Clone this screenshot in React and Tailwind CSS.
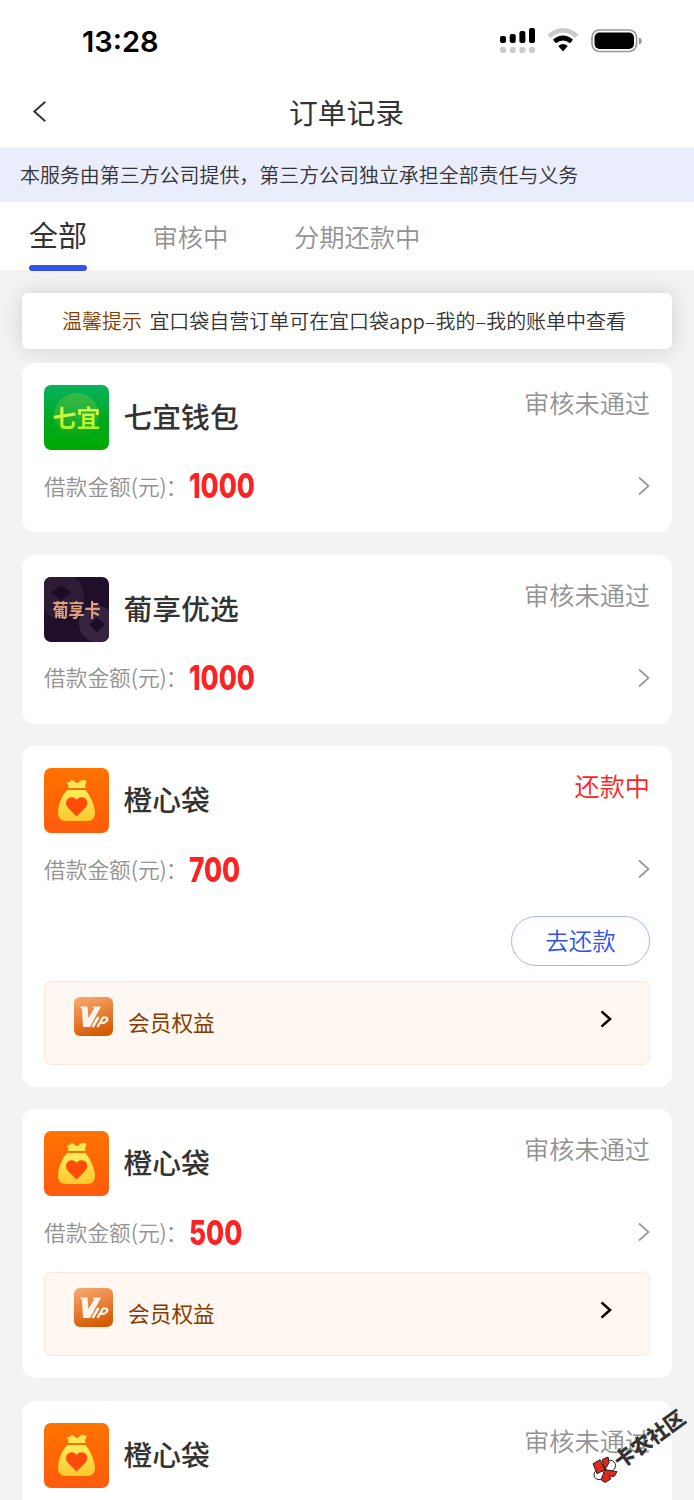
const tabs = ["全部", "审核中", "分期还款中"];

const orders = [
  { id: 1, name: "七宜钱包", logo: "qiyi", amount: 1000, status: "审核未通过" },
  { id: 2, name: "葡享优选", logo: "puxiang", amount: 1000, status: "审核未通过" },
  { id: 3, name: "橙心袋", logo: "bag", amount: 700, status: "还款中", repay: true, vip: true },
  { id: 4, name: "橙心袋", logo: "bag", amount: 500, status: "审核未通过", vip: true },
  { id: 5, name: "橙心袋", logo: "bag", amount: 500, status: "审核未通过", vip: true },
];

function StatusBar() {
  return (
    <div className="flex h-[76px] items-center justify-between pt-[6px] pr-[52px] pl-[82px]">
      <span className="pt-[2px] font-['Inter'] text-[29px] font-semibold text-black">13:28</span>
      <svg width="142" height="28" viewBox="0 0 142 28" className="mt-[-1px]">
        <g fill="#000">
          <rect x="0" y="9" width="6" height="7" rx="2" />
          <rect x="9.7" y="7" width="6" height="9" rx="2" />
          <rect x="19.4" y="4" width="6" height="12" rx="2" />
          <rect x="29" y="1" width="6" height="15" rx="2" />
        </g>
        <g fill="#cbcbcb">
          <rect x="0" y="20" width="6" height="6" rx="2" />
          <rect x="9.7" y="20" width="6" height="6" rx="2" />
          <rect x="19.4" y="20" width="6" height="6" rx="2" />
          <rect x="29" y="20" width="6" height="6" rx="2" />
        </g>
        <path d="M49 9.2Q63 -2.5 77 9.2" fill="none" stroke="#cbcbcb" strokeWidth="4.6" />
        <path d="M54.5 14.5Q63 7.5 71.5 14.5" fill="none" stroke="#000" strokeWidth="4.6" />
        <path d="M58.2 19Q63 15 67.8 19L63 24.5Z" fill="#000" />
        <rect x="92" y="3" width="44.5" height="21.5" rx="7.5" fill="#fff" stroke="#999" strokeWidth="1.7" />
        <rect x="94.5" y="5.5" width="39.5" height="16.5" rx="5" fill="#000" />
        <path d="M138.8 10.5q3 1 3 3.5t-3 3.5z" fill="#999" />
      </svg>
    </div>
  );
}

function Chevron({ className }) {
  return (
    <svg viewBox="0 0 12 20" fill="none" stroke="currentColor" className={className}>
      <path d="M1 1.5L10.5 10L1 18.5" />
    </svg>
  );
}

function Logo({ type }) {
  if (type === "qiyi") {
    return (
      <div className="relative flex size-[65px] items-center justify-center overflow-hidden rounded-[7px] bg-linear-to-b from-[#08b35c] via-[#02a81f] to-[#00aa00]">
        <div className="absolute top-[8px] left-[10px] size-[45px] rounded-full bg-linear-to-b from-[#35ba48] to-[#02a80f]" />
        <span className="relative mt-[-1px] bg-linear-to-b from-[#f0f550] to-[#9df51a] bg-clip-text text-[24px] leading-[34px] font-bold text-transparent">七宜</span>
      </div>
    );
  }
  if (type === "puxiang") {
    return (
      <div className="relative flex size-[65px] items-center justify-center overflow-hidden rounded-[7px] bg-[#200f2b]">
        <svg viewBox="0 0 65 65" className="absolute inset-0 size-[65px]">
          <circle cx="17" cy="19" r="23" fill="#2e1c37" />
          <path d="M17 8l10.5 7.5-10.5 7.5-10.5-7.5z" fill="#1b0c25" />
          <circle cx="53" cy="47" r="18" fill="#382440" />
          <path d="M53 40l8 7.5-8 7.5-8-7.5z" fill="#1c0d26" />
        </svg>
        <span className="relative scale-y-[1.15] text-[16px] leading-[24px] font-bold text-[#dea17b]">葡享卡</span>
      </div>
    );
  }
  return (
    <svg viewBox="0 0 65 65" className="size-[65px] rounded-[7px]">
      <defs>
        <linearGradient id="orange" x2="0" y2="1">
          <stop stopColor="#ff7300" />
          <stop offset="1" stopColor="#ff5b0c" />
        </linearGradient>
        <linearGradient id="gold" x2="0" y2="1">
          <stop stopColor="#ffed5b" />
          <stop offset="1" stopColor="#ffc72e" />
        </linearGradient>
      </defs>
      <rect width="65" height="65" fill="url(#orange)" />
      <path d="M24 20Q25.500 17.500 22.500 14.500Q26 14.500 27.500 12Q29.500 12 31 14Q33 16 35 14Q37 11.500 39 12Q42.500 11.500 42.500 13.500Q40.500 16.500 41.500 20Z" fill="#ffe654" />
      <path d="M23.500 22H41.500C46 27 51 38 51 45C51 50 48 53 43.500 53H21.500C17 53 14 50 14 45C14 37 18 27 23.500 22Z" fill="url(#gold)" />
      <path d="M32.500 48.500L24.200 40C21.200 37 21.500 32.500 24.500 30.300C27.500 28.200 31 29.300 32.500 32C34 29.300 38 28.200 41 30.300C44 32.500 44 37 41 40Z" fill="#ff4b08" />
    </svg>
  );
}

function VipIcon() {
  return (
    <svg viewBox="0 0 39 39" className="size-[39px] rounded-[6px]">
      <defs>
        <linearGradient id="vip" x1="0.2" y1="0" x2="0.5" y2="1">
          <stop stopColor="#f8a66c" />
          <stop offset="1" stopColor="#d55b03" />
        </linearGradient>
      </defs>
      <rect width="39" height="39" fill="url(#vip)" />
      <path d="M6 9.5H13.5L14.5 21L20 11.5L18.5 9.5H27L16 30H9L8 12Z" fill="#fff5ec" />
      <g fill="none" stroke="#fff5ec">
        <path d="M18.5 30L24.5 20" strokeWidth="2.6" />
        <path d="M23.5 30L29 20.5H32Q34.5 21 32.5 24Q31.5 25.8 29 25.8H26" strokeWidth="2.2" />
      </g>
    </svg>
  );
}

function OrderCard({ order }) {
  return (
    <div className="rounded-[13px] bg-white p-[22px]">
      <div className="flex">
        <Logo type={order.logo} />
        <div className="ml-[14.5px] flex-1 text-[28.8px] leading-[62px] font-medium text-[#333]">{order.name}</div>
        <div className={`text-[25.2px] leading-[35px] font-[350] ${order.repay ? "text-[#ff2222]" : "text-[#929292]"}`}>
          {order.status}
        </div>
      </div>
      <div className="mt-[17px] flex h-[40px] items-center">
        <span className="w-[145px] pb-[2px] text-[21.7px] font-[350] whitespace-nowrap text-[#929292]">
          借款金额(元)<span className="ml-[-1px]">：</span>
        </span>
        <span className="origin-left scale-x-[0.77] pb-[2px] font-['Inter'] text-[34px] font-extrabold text-[#ff2222]">{order.amount}</span>
        <Chevron className="mt-[-2px] ml-auto h-[20px] w-[12px] stroke-[1.7px] text-[#999]" />
      </div>
      {order.repay && (
        <div className="mt-[26px] mb-[-4px] flex justify-end">
          <button className="h-[50px] w-[139px] rounded-full border-[1.5px] border-[#a9b7f8] pb-[2px] text-[23.5px] font-[350] text-[#3152e8]">
            去还款
          </button>
        </div>
      )}
      {order.vip ? (
        <div className="mt-[18.8px] flex h-[84px] rounded-[7px] border-[1.5px] border-[#fde7d9] bg-[#fff8f2] pr-[37px] pl-[29px]">
          <div className="mt-[15px]">
            <VipIcon />
          </div>
          <span className="ml-[15px] flex-1 text-[21.7px] leading-[80px] text-[#843c00]">会员权益</span>
          <Chevron className="mt-[28px] h-[18px] w-[12px] stroke-[2.8px] text-black" />
        </div>
      ) : (
        <div className="h-[3.5px]" />
      )}
    </div>
  );
}

function Watermark() {
  return (
    <div className="absolute top-[1431px] left-[584px] flex w-[110px] rotate-[-36deg] items-center">
      <svg width="26" height="26" viewBox="0 0 26 26" className="shrink-0 rotate-[36deg]">
        <g stroke="#222" strokeWidth="1">
          <circle cx="18" cy="9" r="5.5" fill="#fff" />
          <circle cx="7" cy="18" r="5" fill="#fff" />
          <path d="M1 7L8 3L13 13L5 17Z" fill="#e3261b" />
          <path d="M10 3L16 0L17 6L13 13Z" fill="#e3261b" />
          <path d="M13 13L25 15L22 20L17 19L19 22L13 26L9 23Z" fill="#e3261b" />
        </g>
      </svg>
      <span className="text-[20.5px] leading-[28px] font-black whitespace-nowrap text-[#333]">卡农社区</span>
    </div>
  );
}

export default function App() {
  return (
    <div
      lang="zh-CN"
      className="relative h-[1500px] w-[694px] overflow-hidden bg-[#f3f3f3] font-['Noto_Sans_CJK_SC',sans-serif] text-[#333]"
    >
      <header className="h-[148px] bg-white">
        <StatusBar />
        <div className="flex h-[71px] items-center px-[32px]">
          <Chevron className="h-[23px] w-[15px] rotate-180 stroke-[1.7px]" />
          <h1 className="mr-[16px] flex-1 text-center text-[28.8px]">订单记录</h1>
        </div>
      </header>
      <p className="h-[54px] bg-[#eaedfc] px-[20px] text-[19.95px] leading-[54px] font-[350]">
        本服务由第三方公司提供，第三方公司独立承担全部责任与义务
      </p>
      <nav className="flex h-[68px] gap-[65.5px] bg-white pl-[29px]">
        {tabs.map((tab, i) => (
          <div
            key={tab}
            className={
              i === 0
                ? "flex h-[68px] flex-col text-[29px] leading-[65px]"
                : "text-[25.3px] leading-[68px] font-[350] text-[#929292]"
            }
          >
            {tab}
            {i === 0 && <span className="mt-[-2px] h-[5.5px] shrink-0 rounded-[3px] bg-[#3152ec]" />}
          </div>
        ))}
      </nav>
      <main className="px-[22px] pt-[23px]">
        <div className="flex h-[56px] items-center gap-[7.5px] rounded-[6px] bg-white pl-[40px] text-[19.98px] font-[350] whitespace-nowrap shadow-[0_0_22px_rgba(0,0,0,0.15)]">
          <span className="text-[#843c00]">温馨提示</span>
          <span>宜口袋自营订单可在宜口袋app–我的–我的账单中查看</span>
        </div>
        <div className="mt-[13.8px] flex flex-col gap-[22.3px]">
          {orders.map((order) => (
            <OrderCard key={order.id} order={order} />
          ))}
        </div>
      </main>
      <Watermark />
    </div>
  );
}
